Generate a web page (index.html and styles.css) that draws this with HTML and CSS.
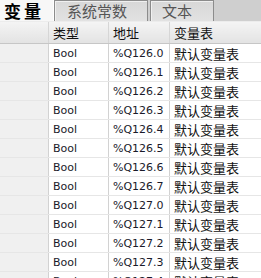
FILE: index.html
```html
<!DOCTYPE html>
<html lang="zh">
<head>
    <meta charset="UTF-8">
    <title>变量</title>
    <link rel="stylesheet" href="styles.css">
</head>
<body>
    <div class="tabs">
        <div class="tab active">变量</div>
        <div class="tab">系统常数</div>
        <div class="tab tab-text">文本</div>
        <div class="tab-fill"></div>
    </div>
    <div class="tab-line"></div>
    <table class="grid">
        <thead>
            <tr>
                <th class="c-idx"></th>
                <th class="c-type">类型</th>
                <th class="c-addr">地址</th>
                <th class="c-table">变量表</th>
            </tr>
        </thead>
        <tbody>
            <tr><td class="c-idx"></td><td>Bool</td><td>%Q126.0</td><td class="cjk">默认变量表</td></tr>
            <tr><td class="c-idx"></td><td>Bool</td><td>%Q126.1</td><td class="cjk">默认变量表</td></tr>
            <tr><td class="c-idx"></td><td>Bool</td><td>%Q126.2</td><td class="cjk">默认变量表</td></tr>
            <tr><td class="c-idx"></td><td>Bool</td><td>%Q126.3</td><td class="cjk">默认变量表</td></tr>
            <tr><td class="c-idx"></td><td>Bool</td><td>%Q126.4</td><td class="cjk">默认变量表</td></tr>
            <tr><td class="c-idx"></td><td>Bool</td><td>%Q126.5</td><td class="cjk">默认变量表</td></tr>
            <tr><td class="c-idx"></td><td>Bool</td><td>%Q126.6</td><td class="cjk">默认变量表</td></tr>
            <tr><td class="c-idx"></td><td>Bool</td><td>%Q126.7</td><td class="cjk">默认变量表</td></tr>
            <tr><td class="c-idx"></td><td>Bool</td><td>%Q127.0</td><td class="cjk">默认变量表</td></tr>
            <tr><td class="c-idx"></td><td>Bool</td><td>%Q127.1</td><td class="cjk">默认变量表</td></tr>
            <tr><td class="c-idx"></td><td>Bool</td><td>%Q127.2</td><td class="cjk">默认变量表</td></tr>
            <tr><td class="c-idx"></td><td>Bool</td><td>%Q127.3</td><td class="cjk">默认变量表</td></tr>
            <tr><td class="c-idx"></td><td>Bool</td><td>%Q127.4</td><td class="cjk">默认变量表</td></tr>
        </tbody>
    </table>
</body>
</html>
```

FILE: styles.css
```css
body {
    margin: 0;
    height: 278px;
    font-family: "DejaVu Sans", "Noto Sans CJK SC", sans-serif;
    background-color: #ffffff;
    overflow: hidden;
}
.tabs {
    display: flex;
    height: 21px;
    background-color: #cfcfcf;
}
.tab {
    box-sizing: border-box;
    height: 21px;
    padding: 0 12px;
    font-family: "Noto Sans CJK SC", sans-serif;
    font-size: 15px;
    line-height: 20px;
    color: #555555;
    background: linear-gradient(#d8d8d8, #e2e2e2);
    border: 1px solid #8c8c8c;
    border-bottom: none;
    box-shadow: inset 1px 1px 0 #f0f0f0;
}
.tab + .tab {
    margin-left: 2px;
}
.tab.active {
    width: 55px;
    padding: 1px 0 0 4px;
    font-size: 17px;
    font-weight: bold;
    letter-spacing: 3px;
    line-height: 19px;
    color: #000000;
    background: #f7f7f7;
    border: none;
    border-right: 1px solid #8c8c8c;
    box-shadow: inset -1px 0 0 #ffffff;
}
.tab.active + .tab {
    margin-left: 0;
    width: 93px;
    padding-left: 12px;
    border-left: none;
}
.tab-text {
    width: 64px;
    padding-left: 11px;
}
.tab-fill {
    flex: 1;
}
.tab-line {
    height: 1px;
    background-color: #ececec;
}
.grid {
    border-collapse: collapse;
    table-layout: fixed;
    width: 261px;
}
.grid th,
.grid td {
    height: 18px;
    padding: 0 0 0 4px;
    line-height: 17px;
    text-align: left;
    white-space: nowrap;
    overflow: hidden;
    border-right: 1px solid #d2d2d2;
    border-bottom: 1px solid #e6e6e6;
}
.grid th {
    height: 21px;
    font-family: "Noto Sans CJK SC", sans-serif;
    font-size: 13px;
    font-weight: normal;
    color: #111111;
    background: linear-gradient(#f4f4f4, #e3e3e3);
    border-bottom: 1px solid #c6c6c6;
    border-right: 1px solid #d6d6d6;
}
.grid td {
    font-size: 11px;
    color: #1a1a2a;
}
.grid td.cjk {
    font-family: "Noto Sans CJK SC", sans-serif;
    font-size: 13px;
    color: #111111;
}
.c-idx {
    width: 44px;
}
.grid td.c-idx {
    background-color: #f0f0f0;
}
.c-type {
    width: 55px;
}
.c-addr {
    width: 56px;
}
.grid th:last-child,
.grid td:last-child {
    border-right: none;
}
```
